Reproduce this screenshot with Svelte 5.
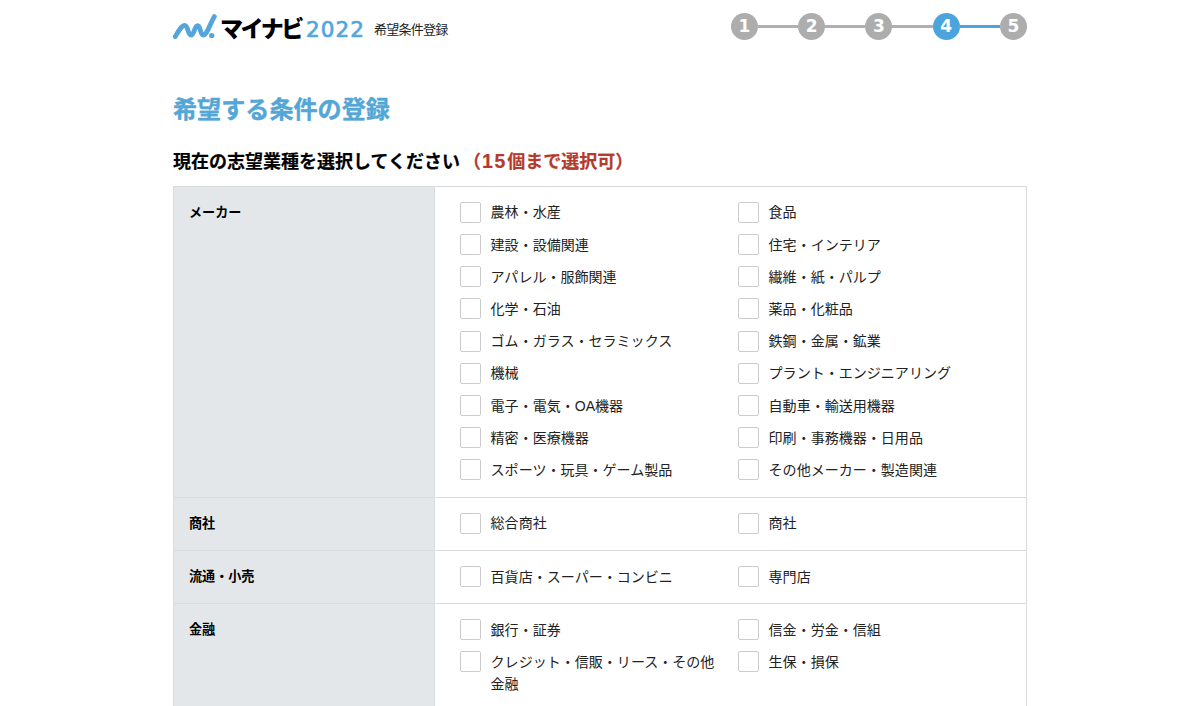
<script lang="ts">
	type Industry = {
		name: string;
		items: string[];
	};

	const steps = [1, 2, 3, 4, 5];
	const currentStep = 4;

	const industries: Industry[] = [
		{
			name: 'メーカー',
			items: [
				'農林・水産',
				'食品',
				'建設・設備関連',
				'住宅・インテリア',
				'アパレル・服飾関連',
				'繊維・紙・パルプ',
				'化学・石油',
				'薬品・化粧品',
				'ゴム・ガラス・セラミックス',
				'鉄鋼・金属・鉱業',
				'機械',
				'プラント・エンジニアリング',
				'電子・電気・OA機器',
				'自動車・輸送用機器',
				'精密・医療機器',
				'印刷・事務機器・日用品',
				'スポーツ・玩具・ゲーム製品',
				'その他メーカー・製造関連'
			]
		},
		{ name: '商社', items: ['総合商社', '商社'] },
		{ name: '流通・小売', items: ['百貨店・スーパー・コンビニ', '専門店'] },
		{
			name: '金融',
			items: ['銀行・証券', '信金・労金・信組', 'クレジット・信販・リース・その他金融', '生保・損保']
		}
	];

	let selected = $state<string[]>([]);
</script>

<div class="page">
	<header>
		<div class="logo">
			<svg class="mark" viewBox="0 0 44 28" width="44" height="28" aria-hidden="true">
				<path
					d="M2.3 23.6 C5 19 8.5 12.3 11.8 12.3 C15.3 12.3 14.5 22 18 22 C21.2 22 21.5 12.7 24.6 12.7 C27.8 12.7 27 22 30.2 22 C34 22 36.5 12 41.3 3.6"
				/>
				<circle cx="38.7" cy="22.6" r="2.7" />
			</svg>
			<span class="brand">マイナビ</span>
			<span class="year">2022</span>
			<span class="sub">希望条件登録</span>
		</div>
		<ol class="steps">
			{#each steps as step}
				<li class:current={step === currentStep} class:next={step > currentStep}>
					<span>{step}</span>
				</li>
			{/each}
		</ol>
	</header>

	<main>
		<h1>希望する条件の登録</h1>
		<h2>
			現在の志望業種を選択してください<em>（<span class="num">15</span>個まで選択可）</em>
		</h2>

		<div class="table">
			{#each industries as industry}
				<section class="row">
					<h3>{industry.name}</h3>
					<div class="items">
						{#each industry.items as item}
							<label>
								<input type="checkbox" value={item} bind:group={selected} />
								<span>{item}</span>
							</label>
						{/each}
					</div>
				</section>
			{/each}
		</div>
	</main>
</div>

<style>
	:global(body) {
		background: #fff;
		overflow: hidden;
	}

	.page {
		width: 854px;
		height: 706px;
		margin: 0 auto;
		overflow: hidden;
		color: #222;
		font-family: 'Liberation Sans', 'Noto Sans CJK JP', sans-serif;
	}

	header {
		display: flex;
		justify-content: space-between;
		height: 93px;
	}

	.logo {
		display: flex;
		align-items: flex-start;
		white-space: nowrap;
	}

	.mark {
		flex: none;
		margin-top: 13px;
	}

	.mark path {
		fill: none;
		stroke: #53a6db;
		stroke-width: 4.8;
		stroke-linecap: round;
		stroke-linejoin: round;
	}

	.mark circle {
		fill: #53a6db;
	}

	.brand {
		width: 85px;
		margin: 13px 0 0 3px;
		color: #000;
		font-family: 'Noto Sans CJK JP', sans-serif;
		font-size: 23px;
		font-weight: 900;
		line-height: 29px;
		letter-spacing: -2.4px;
	}

	.year {
		width: 67px;
		margin: 15px 0 0 1px;
		color: #53a6db;
		font-family: 'DejaVu Sans', sans-serif;
		font-size: 21.5px;
		line-height: 30px;
		letter-spacing: 1.1px;
		-webkit-text-stroke: 0.7px #53a6db;
	}

	.sub {
		margin: 20px 0 0 1px;
		font-size: 13px;
		line-height: 20px;
		letter-spacing: -0.75px;
	}

	.steps {
		display: flex;
		margin: 13px 0 0;
		padding: 0;
		list-style: none;
	}

	.steps li {
		display: flex;
		align-items: center;
		height: 27px;
	}

	.steps li + li::before {
		content: '';
		width: 40.3px;
		height: 3px;
		background: #b0b0b0;
	}

	.steps li.next::before {
		background: #4ba5dc;
	}

	.steps span {
		width: 27px;
		height: 27px;
		border-radius: 50%;
		background: #adadad;
		color: #fff;
		font-family: 'DejaVu Sans', sans-serif;
		font-size: 17px;
		font-weight: 700;
		line-height: 27px;
		text-align: center;
	}

	.steps .current span {
		background: #4ba5dc;
	}

	h1 {
		margin: 0;
		color: #53a6d6;
		font-size: 24.1px;
		line-height: 34px;
		-webkit-text-stroke: 0.4px #53a6d6;
	}

	h2 {
		height: 26px;
		margin: 21px 0 0;
		color: #000;
		font-size: 18px;
		line-height: 26px;
		white-space: nowrap;
		-webkit-text-stroke: 0.2px;
	}

	h2 em {
		margin-left: 3px;
		color: #b53a2b;
		font-style: normal;
	}

	.num {
		margin-left: 1px;
		font-family: 'Liberation Sans', sans-serif;
		font-size: 19.5px;
		letter-spacing: 1.8px;
	}

	.table {
		box-sizing: border-box;
		margin-top: 12px;
		border: 1px solid #d9dcdf;
	}

	.row {
		display: grid;
		grid-template-columns: 261px 1fr;
	}

	.row + .row {
		border-top: 1px solid #d9dcdf;
	}

	h3 {
		margin: 0;
		padding: 16px 15px 14px;
		border-right: 1px solid #d9dcdf;
		background: #e3e7ea;
		color: #000;
		font-size: 13.1px;
		line-height: 20px;
	}

	.items {
		display: grid;
		grid-template-columns: 278px 278px;
		padding: 10px 0 10.1px 25px;
	}

	label {
		display: flex;
		align-items: flex-start;
		padding: 5.2px 0 5.5px;
		font-size: 14.04px;
		line-height: 21.5px;
	}

	input {
		flex: none;
		box-sizing: border-box;
		width: 21px;
		height: 21px;
		margin: -0.3px 9.6px 0 0;
		border: 1px solid #ccc;
		border-radius: 2px;
		background: #fff;
		appearance: none;
	}

	input:checked {
		background: #4ba5dc;
	}

	label span {
		width: 230px;
		padding-top: 0.3px;
		margin-bottom: -0.3px;
	}
</style>
